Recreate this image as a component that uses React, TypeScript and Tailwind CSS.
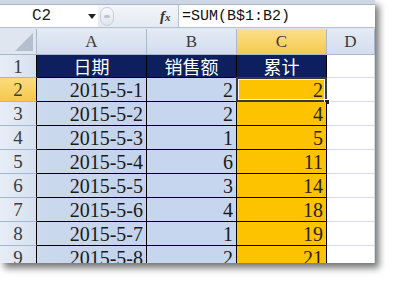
const dates = ["2015-5-1", "2015-5-2", "2015-5-3", "2015-5-4", "2015-5-5", "2015-5-6", "2015-5-7", "2015-5-8"];
const sales = [2, 2, 1, 6, 3, 4, 1, 2];
const totals = [2, 4, 5, 11, 14, 18, 19, 21];

const serif = "font-['Liberation_Serif','Noto_Sans_CJK_SC',serif]";
const cjk = "font-['Noto_Sans_CJK_SC',sans-serif]";

function ColHeader({ label, active }: { label: string; active?: boolean }) {
  return (
    <div
      className={`flex items-center justify-center border-r border-b border-[#a9b8cc] text-[17px] leading-none text-[#3a3a3a] ${serif} ${
        active ? "bg-gradient-to-b from-[#fbe08a] to-[#f5c94a]" : "bg-gradient-to-b from-[#e4ebf5] to-[#d3dded]"
      }`}
    >
      {label}
    </div>
  );
}

function RowHeader({ n, active }: { n: number; active?: boolean }) {
  return (
    <div
      className={`flex items-center justify-center border-r border-r-black border-b border-b-[#a4b6cc] text-[19px] leading-none text-[#3c3c3c] ${serif} ${
        active ? "bg-gradient-to-b from-[#fbdc7c] to-[#f6c84a]" : "bg-gradient-to-r from-[#e8eef7] to-[#d6e0ee]"
      }`}
    >
      {n}
    </div>
  );
}

export default function App() {
  return (
    <div className="w-[397px] h-[285px] bg-white overflow-hidden">
      <div className="w-[375px] h-[263px] overflow-hidden bg-[#dfe6f0] shadow-[4px_5px_7px_rgba(0,0,0,0.55)] flex flex-col">
        {/* ribbon edge */}
        <div className="h-[5px] shrink-0 bg-[#cdd6e4] border-b border-[#aab6c8]" />

        {/* formula bar */}
        <div className="h-[23px] shrink-0 flex bg-gradient-to-b from-[#f3f6fa] to-[#e4eaf2] border-b border-[#b5c1d2]">
          <div className="w-[98px] bg-white flex items-center relative">
            <span className="ml-[32px] text-[16px] leading-none text-[#222] font-['Liberation_Mono',monospace]">C2</span>
            <svg className="absolute left-[88px] top-[9px]" width="8" height="5" viewBox="0 0 8 5">
              <path d="M0 0h8L4 5z" fill="#222" />
            </svg>
          </div>
          <div className="w-[80px] flex items-center">
            <div className="ml-[2px] w-[14px] h-[19px] rounded-full border border-[#c7cfda] bg-gradient-to-b from-[#f7f9fb] to-[#dfe5ec] flex items-center justify-center">
              <div className="w-[6px] h-[3px] rounded-full bg-[#bcc5d0]" />
            </div>
            <span className="ml-[46px] italic font-bold text-[15px] leading-none text-[#333] font-['Liberation_Serif',serif]">
              f<span className="text-[11px]">x</span>
            </span>
          </div>
          <div className="flex-1 bg-white border-l border-[#b5c1d2] flex items-center">
            <span className="ml-[3px] text-[15px] leading-none text-[#111] font-['Liberation_Mono',monospace]">=SUM(B$1:B2)</span>
          </div>
        </div>

        <div className="h-[1px] shrink-0 bg-[#dfe6f0]" />

        {/* sheet */}
        <div className="grid grid-cols-[37px_110px_90px_90px_48px] grid-rows-[26px_23px_repeat(8,24px)] bg-white">
          {/* corner */}
          <div className="border-r border-b border-[#a9b8cc] bg-[#dfe6f0] flex items-end justify-end p-[3px]">
            <svg width="18" height="18" viewBox="0 0 18 18">
              <path d="M18 0V18H0z" fill="#b4bfcd" />
            </svg>
          </div>
          <ColHeader label="A" />
          <ColHeader label="B" />
          <ColHeader label="C" active />
          <ColHeader label="D" />

          {/* row 1 */}
          <RowHeader n={1} />
          <div className={`bg-[#0d1f5e] border-r border-b border-black flex items-center justify-center text-white text-[18px] leading-none ${cjk}`}>日期</div>
          <div className={`bg-[#0d1f5e] border-r border-b border-black flex items-center justify-center text-white text-[18px] leading-none ${cjk}`}>销售额</div>
          <div className={`bg-[#0d1f5e] border-r border-b border-black flex items-center justify-center text-white text-[18px] leading-none ${cjk}`}>累计</div>
          <div className="border-r border-b border-[#d4dbe6]" />

          {dates.map((d, i) => (
            <div key={d} className="contents">
              <RowHeader n={i + 2} active={i === 0} />
              <div className={`bg-gradient-to-r from-[#cbd9ee] to-[#c3d3ec] border-r border-b border-black flex items-end justify-end pr-[3px] pb-[1px] text-[20px] leading-none text-[#1a1a1a] ${serif}`}>
                {d}
              </div>
              <div className={`bg-[#c6d6ee] border-r border-b border-black flex items-end justify-end pr-[3px] pb-[1px] text-[20px] leading-none text-[#1a1a1a] ${serif}`}>
                {sales[i]}
              </div>
              <div className={`relative bg-[#fdc200] border-r border-b border-black flex items-end justify-end pr-[3px] pb-[1px] text-[20px] leading-none text-[#2a2208] ${serif}`}>
                {totals[i]}
                {i === 0 && (
                  <>
                    <div className="absolute -left-px -top-px -right-px -bottom-px border-2 border-[#3a3a3a] shadow-[inset_0_0_0_1px_#f3f3f3]" />
                    <div className="absolute -right-[4px] -bottom-[4px] w-[6px] h-[6px] bg-[#222] border border-white" />
                  </>
                )}
              </div>
              <div className="border-r border-b border-[#d4dbe6]" />
            </div>
          ))}
        </div>
      </div>
    </div>
  );
}
